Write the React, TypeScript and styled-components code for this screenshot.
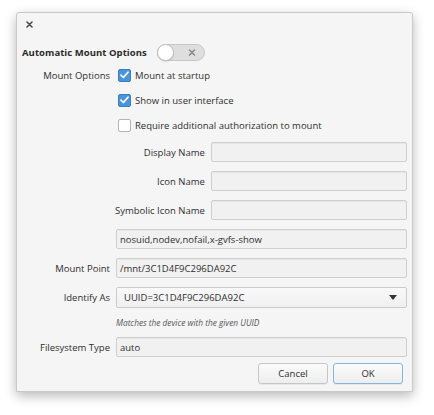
import { FC, ReactNode } from "react";
import styled, { createGlobalStyle } from "styled-components";

const GlobalStyle = createGlobalStyle`
  html, body {
    margin: 0;
    padding: 0;
    background: #ffffff;
  }
  body {
    font-family: "Open Sans", "Noto Sans", sans-serif;
    font-size: 9.5px;
    color: #2f2f2f;
  }
`;

const Page = styled.div`
  width: 434px;
  height: 415px;
  padding: 12px 0 0 16px;
  box-sizing: border-box;
`;

const Dialog = styled.div`
  width: 397px;
  height: 380px;
  box-sizing: border-box;
  background: #f5f5f5;
  border: 1px solid #c9c9c9;
  border-radius: 3px 3px 1px 1px;
  box-shadow: 0 4px 12px rgba(0, 0, 0, 0.28);
  display: flex;
  flex-direction: column;
`;

const TitleBar = styled.div`
  height: 23px;
  display: flex;
  align-items: center;
  padding-left: 9px;
`;

const CloseIcon = () => (
  <svg width="7" height="7" viewBox="0 0 7 7">
    <path d="M1 1 L6 6 M6 1 L1 6" stroke="#4d4d4d" strokeWidth="1.6" strokeLinecap="round" />
  </svg>
);

const Body = styled.div`
  display: flex;
  flex-direction: column;
  padding: 0 5px 0 5px;
`;

const HeadingRow = styled.div`
  height: 18px;
  margin-top: 7px;
  display: flex;
  align-items: center;
  gap: 10px;
`;

const Heading = styled.div`
  font-weight: 700;
  color: #2a2a2a;
  letter-spacing: 0.05px;
`;

const Toggle = styled.div`
  position: relative;
  width: 48px;
  height: 17px;
  box-sizing: border-box;
  border-radius: 9px;
  background: #dedede;
  border: 1px solid #c6c6c6;
`;

const Knob = styled.div`
  position: absolute;
  left: -1px;
  top: -1px;
  width: 17px;
  height: 17px;
  box-sizing: border-box;
  border-radius: 50%;
  background: #ffffff;
  border: 1px solid #bdbdbd;
  box-shadow: 0 1px 1px rgba(0, 0, 0, 0.1);
`;

const ToggleMark = styled.svg`
  position: absolute;
  right: 8px;
  top: 4px;
`;

const Row = styled.div<{ $mt: number }>`
  display: grid;
  grid-template-columns: 88px 1fr;
  column-gap: 6px;
  align-items: center;
  margin-top: ${(p) => p.$mt}px;
`;

const Label = styled.div`
  text-align: right;
  white-space: nowrap;
`;

const CheckLine = styled.label`
  height: 18px;
  display: flex;
  align-items: center;
  gap: 4px;
  padding-left: 2px;
`;

const Box = styled.span<{ $on: boolean }>`
  width: 13px;
  height: 13px;
  box-sizing: border-box;
  border-radius: 2px;
  border: 1px solid ${(p) => (p.$on ? "#3a7fc2" : "#b4b4b4")};
  background: ${(p) => (p.$on ? "#4a94d9" : "#ffffff")};
  display: flex;
  align-items: center;
  justify-content: center;
`;

const Check: FC<{ on: boolean; children: ReactNode }> = ({ on, children }) => (
  <CheckLine>
    <Box $on={on}>
      {on && (
        <svg width="9" height="8" viewBox="0 0 9 8">
          <path d="M1 4.2 L3.4 6.5 L8 1.2" stroke="#ffffff" strokeWidth="1.7" fill="none" strokeLinecap="round" strokeLinejoin="round" />
        </svg>
      )}
    </Box>
    <span>{children}</span>
  </CheckLine>
);

const SubGrid = styled.div`
  display: grid;
  grid-template-columns: auto 1fr;
  column-gap: 6px;
  row-gap: 9px;
  align-items: center;
  margin-left: -1px;
`;

const Entry = styled.div`
  height: 20px;
  box-sizing: border-box;
  border: 1px solid #cfcfcf;
  border-radius: 2px;
  background: #f1f1f1;
  box-shadow: inset 0 1px 0 rgba(0, 0, 0, 0.04);
  display: flex;
  align-items: center;
  padding: 0 3px;
  white-space: nowrap;
`;

const Combo = styled.div`
  height: 21px;
  box-sizing: border-box;
  border: 1px solid #cbcbcb;
  border-radius: 2px;
  background: linear-gradient(#f9f9f9, #efefef);
  display: flex;
  align-items: center;
  justify-content: space-between;
  padding: 0 9px 0 7px;
`;

const Hint = styled.div`
  font-style: italic;
  font-size: 8.3px;
  color: #555555;
  height: 14px;
  display: flex;
  align-items: center;
`;

const Buttons = styled.div`
  display: flex;
  justify-content: flex-end;
  gap: 5px;
  margin-top: 6px;
  padding-right: 4px;
`;

const Button = styled.button<{ $default?: boolean }>`
  width: 70px;
  height: 21px;
  box-sizing: border-box;
  font-family: inherit;
  font-size: 9.5px;
  color: #2f2f2f;
  border-radius: 3px;
  border: 1px solid ${(p) => (p.$default ? "#86b5e0" : "#c6c6c6")};
  background: linear-gradient(#fbfbfb, #eeeeee);
  box-shadow: 0 1px 0 rgba(0, 0, 0, 0.05);
  padding: 0;
`;

export default function App() {
  return (
    <>
      <GlobalStyle />
      <Page>
        <Dialog>
          <TitleBar>
            <CloseIcon />
          </TitleBar>
          <Body>
            <HeadingRow>
              <Heading>Automatic Mount Options</Heading>
              <Toggle>
                <Knob />
                <ToggleMark width="8" height="7" viewBox="0 0 8 7">
                  <path d="M1.5 1 L6.5 6 M6.5 1 L1.5 6" stroke="#8a8a8a" strokeWidth="1.6" strokeLinecap="round" />
                </ToggleMark>
              </Toggle>
            </HeadingRow>

            <Row $mt={5}>
              <Label>Mount Options</Label>
              <Check on>Mount at startup</Check>
            </Row>
            <Row $mt={7}>
              <span />
              <Check on>Show in user interface</Check>
            </Row>
            <Row $mt={7}>
              <span />
              <Check on={false}>Require additional authorization to mount</Check>
            </Row>

            <Row $mt={8}>
              <span />
              <SubGrid>
                <Label>Display Name</Label>
                <Entry />
                <Label>Icon Name</Label>
                <Entry />
                <Label>Symbolic Icon Name</Label>
                <Entry />
              </SubGrid>
            </Row>
            <Row $mt={9}>
              <span />
              <Entry>nosuid,nodev,nofail,x-gvfs-show</Entry>
            </Row>
            <Row $mt={9}>
              <Label>Mount Point</Label>
              <Entry>/mnt/3C1D4F9C296DA92C</Entry>
            </Row>
            <Row $mt={9}>
              <Label>Identify As</Label>
              <Combo>
                <span>UUID=3C1D4F9C296DA92C</span>
                <svg width="8" height="5" viewBox="0 0 8 5">
                  <path d="M0 0 H8 L4 5 Z" fill="#333333" />
                </svg>
              </Combo>
            </Row>
            <Row $mt={7}>
              <span />
              <Hint>Matches the device with the given UUID</Hint>
            </Row>
            <Row $mt={8}>
              <Label>Filesystem Type</Label>
              <Entry>auto</Entry>
            </Row>
            <Buttons>
              <Button>Cancel</Button>
              <Button $default>OK</Button>
            </Buttons>
          </Body>
        </Dialog>
      </Page>
    </>
  );
}
